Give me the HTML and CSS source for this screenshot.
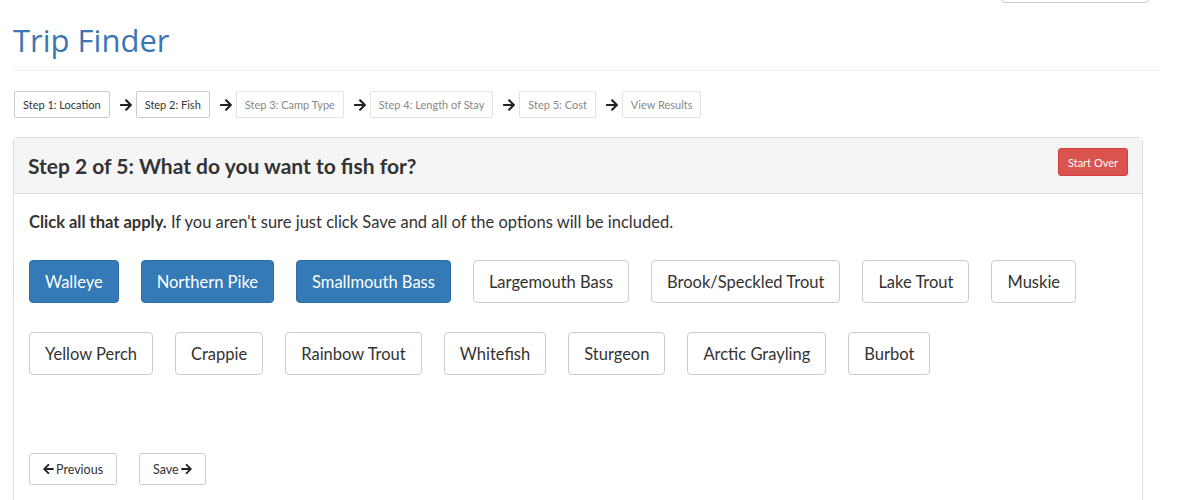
FILE: index.html
```html
<!DOCTYPE html>
<html lang="en">
<head>
    <meta charset="UTF-8">
    <meta name="viewport" content="width=device-width, initial-scale=1.0">
    <title>Trip Finder</title>
    <link rel="stylesheet" href="styles.css">
</head>

<body>
    <div class="page">
        <div class="top-bar">
            <div class="search-box"></div>
        </div>

        <h1 class="title">Trip Finder</h1>
        <hr class="rule">

        <div class="steps">
            <a href="#" class="step done">Step 1: Location</a>
            <svg class="arrow" viewBox="0 0 448 512"><path d="M190.5 66.9l22.2-22.2c9.4-9.4 24.6-9.4 33.9 0L441 239c9.4 9.4 9.4 24.6 0 33.9L246.6 467.3c-9.4 9.4-24.6 9.4-33.9 0l-22.2-22.2c-9.5-9.5-9.3-25 .4-34.3L311.4 296H24c-13.3 0-24-10.7-24-24v-32c0-13.300 10.7-24 24-24h287.4L190.9 101.2c-9.8-9.3-10-24.8-.4-34.3z"/></svg>
            <a href="#" class="step done">Step 2: Fish</a>
            <svg class="arrow" viewBox="0 0 448 512"><path d="M190.5 66.9l22.2-22.2c9.4-9.4 24.6-9.4 33.9 0L441 239c9.4 9.4 9.4 24.6 0 33.9L246.6 467.3c-9.4 9.4-24.6 9.4-33.9 0l-22.2-22.2c-9.5-9.5-9.3-25 .4-34.3L311.4 296H24c-13.3 0-24-10.7-24-24v-32c0-13.3 10.7-24 24-24h287.4L190.9 101.2c-9.8-9.3-10-24.8-.4-34.3z"/></svg>
            <a href="#" class="step">Step 3: Camp Type</a>
            <svg class="arrow" viewBox="0 0 448 512"><path d="M190.5 66.9l22.2-22.2c9.4-9.4 24.6-9.4 33.9 0L441 239c9.4 9.4 9.4 24.6 0 33.9L246.6 467.3c-9.4 9.4-24.6 9.4-33.9 0l-22.2-22.2c-9.5-9.5-9.3-25 .4-34.3L311.4 296H24c-13.3 0-24-10.7-24-24v-32c0-13.3 10.7-24 24-24h287.4L190.9 101.2c-9.8-9.3-10-24.8-.4-34.3z"/></svg>
            <a href="#" class="step">Step 4: Length of Stay</a>
            <svg class="arrow" viewBox="0 0 448 512"><path d="M190.5 66.9l22.2-22.2c9.4-9.4 24.6-9.4 33.9 0L441 239c9.4 9.4 9.4 24.6 0 33.9L246.6 467.3c-9.4 9.4-24.6 9.4-33.9 0l-22.2-22.2c-9.5-9.5-9.3-25 .4-34.3L311.4 296H24c-13.3 0-24-10.7-24-24v-32c0-13.3 10.7-24 24-24h287.4L190.9 101.2c-9.8-9.3-10-24.8-.4-34.3z"/></svg>
            <a href="#" class="step">Step 5: Cost</a>
            <svg class="arrow" viewBox="0 0 448 512"><path d="M190.5 66.9l22.2-22.2c9.4-9.4 24.6-9.4 33.9 0L441 239c9.4 9.4 9.4 24.6 0 33.9L246.6 467.3c-9.4 9.4-24.6 9.4-33.9 0l-22.2-22.2c-9.5-9.5-9.3-25 .4-34.3L311.4 296H24c-13.3 0-24-10.7-24-24v-32c0-13.3 10.7-24 24-24h287.4L190.9 101.2c-9.8-9.3-10-24.8-.4-34.3z"/></svg>
            <a href="#" class="step">View Results</a>
        </div>

        <div class="panel">
            <div class="panel-heading">
                <h3>Step 2 of 5: What do you want to fish for?</h3>
                <button class="btn-danger">Start Over</button>
            </div>
            <div class="panel-body">
                <p class="intro"><strong>Click all that apply.</strong> If you aren't sure just click Save and all of the options will be included.</p>

                <div class="fish-list">
                    <button class="fish active">Walleye</button>
                    <button class="fish active">Northern Pike</button>
                    <button class="fish active">Smallmouth Bass</button>
                    <button class="fish">Largemouth Bass</button>
                    <button class="fish">Brook/Speckled Trout</button>
                    <button class="fish">Lake Trout</button>
                    <button class="fish">Muskie</button>
                    <button class="fish">Yellow Perch</button>
                    <button class="fish">Crappie</button>
                    <button class="fish">Rainbow Trout</button>
                    <button class="fish">Whitefish</button>
                    <button class="fish">Sturgeon</button>
                    <button class="fish">Arctic Grayling</button>
                    <button class="fish">Burbot</button>
                </div>

                <div class="nav-buttons">
                    <button class="btn-nav">
                        <svg class="icon" viewBox="0 0 448 512"><path d="M257.5 445.1l-22.2 22.2c-9.4 9.4-24.6 9.4-33.9 0L7 273c-9.4-9.4-9.4-24.6 0-33.9L201.4 44.7c9.4-9.4 24.6-9.4 33.9 0l22.2 22.2c9.5 9.5 9.3 25-.4 34.3L136.6 216H424c13.3 0 24 10.7 24 24v32c0 13.3-10.7 24-24 24H136.6l120.5 114.8c9.8 9.3 10 24.8.4 34.3z"/></svg>Previous
                    </button>
                    <button class="btn-nav">Save<svg class="icon" viewBox="0 0 448 512"><path d="M190.5 66.9l22.2-22.2c9.4-9.4 24.6-9.4 33.9 0L441 239c9.4 9.4 9.4 24.6 0 33.9L246.6 467.3c-9.4 9.4-24.6 9.4-33.9 0l-22.2-22.2c-9.5-9.5-9.3-25 .4-34.3L311.4 296H24c-13.3 0-24-10.7-24-24v-32c0-13.3 10.7-24 24-24h287.4L190.9 101.2c-9.8-9.3-10-24.8-.4-34.3z"/></svg></button>
                </div>
            </div>
        </div>
    </div>
</body>
</html>
```

FILE: styles.css
```css
body {
    font-family: Lato, "Open Sans", Arial, sans-serif;
    margin: 0;
    padding: 0;
    color: #333;
    background: #fff;
    overflow: hidden;
}
.page {
    margin-left: 13px;
    width: 1146px;
}
.top-bar {
    display: flex;
    justify-content: flex-end;
    height: 0;
}
.search-box {
    width: 148px;
    height: 30px;
    margin-top: -27px;
    margin-right: 10px;
    border: 1px solid #ccc;
    border-radius: 4px;
    box-sizing: border-box;
}
.title {
    font-family: "Open Sans", Lato, sans-serif;
    font-weight: 400;
    font-size: 31px;
    color: #3a76b5;
    margin: 0;
    padding-top: 20px;
    line-height: 40px;
}
.rule {
    border: 0;
    border-top: 1px solid #eee;
    margin: 10px 0 20px 0;
}
.steps {
    display: flex;
    align-items: center;
    margin-left: 1px;
}
.step {
    display: block;
    height: 27px;
    line-height: 25px;
    box-sizing: border-box;
    padding: 0 8px;
    font-size: 11px;
    color: #888;
    border: 1px solid #e3e3e3;
    border-radius: 2px;
    text-decoration: none;
}
.step.done {
    color: #333;
    border-color: #ccc;
}
.arrow {
    width: 12px;
    height: 14px;
    margin: 0 4px 0 10px;
    fill: #222;
}
.panel {
    margin-top: 19px;
    width: 1128px;
    border: 1px solid #ddd;
    border-radius: 4px;
    height: 380px;
}
.panel-heading {
    display: flex;
    justify-content: space-between;
    align-items: center;
    background: #f5f5f5;
    border-bottom: 1px solid #ddd;
    height: 55px;
    padding: 0 14px;
}
.panel-heading h3 {
    margin: 0;
    font-size: 21px;
    font-weight: 700;
    color: #333;
}
.btn-danger {
    font-family: inherit;
    background: #d9534f;
    border: 1px solid #d43f3a;
    color: #fff;
    font-size: 11px;
    border-radius: 3px;
    height: 28px;
    padding: 0 9px;
    margin-top: -7px;
}
.panel-body {
    padding: 18px 15px;
}
.intro {
    margin: 0 0 28px 0;
    font-size: 16.5px;
}
.fish-list {
    display: flex;
    flex-wrap: wrap;
    column-gap: 22px;
    row-gap: 29px;
    padding-right: 40px;
}
.fish {
    font-family: inherit;
    font-size: 16.5px;
    height: 43px;
    padding: 0 15px;
    background: #fff;
    color: #333;
    border: 1px solid #ccc;
    border-radius: 4px;
}
.fish.active {
    background: #337ab7;
    border-color: #2e6da4;
    color: #fff;
}
.nav-buttons {
    display: flex;
    gap: 22px;
    margin-top: 78px;
}
.btn-nav {
    font-family: inherit;
    display: flex;
    align-items: center;
    gap: 2px;
    font-size: 12.5px;
    height: 32px;
    padding: 0 13px;
    background: #fff;
    color: #333;
    border: 1px solid #ccc;
    border-radius: 3px;
}
.icon {
    width: 11px;
    height: 12px;
    fill: #222;
}
```
